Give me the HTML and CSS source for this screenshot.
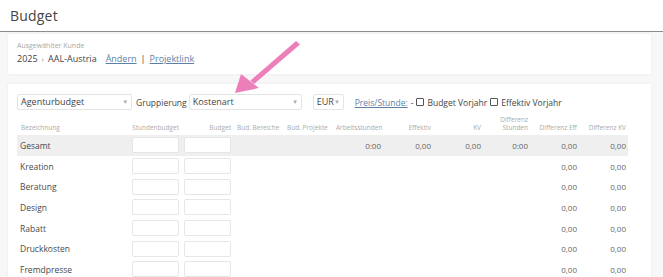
FILE: index.html
```html
<!DOCTYPE html>
<html lang="de">
<head>
    <title>Budget</title>
    <meta charset="UTF-8">
    <link rel="stylesheet" href="styles.css">
</head>
<body>
    <header class="page-head">
        <h1>Budget</h1>
    </header>

    <main class="content">
        <section class="card customer">
            <div class="label">Ausgewählter Kunde</div>
            <div class="crumbs">
                <span>2025</span>
                <span class="sep">›</span>
                <span>AAL-Austria</span>
                <a href="#" class="link">Ändern</a> | <a href="#" class="link">Projektlink</a>
            </div>
        </section>

        <section class="card budget">
            <div class="filters">
                <div class="select w-agentur">Agenturbudget<span class="caret">▾</span></div>
                <span class="filter-label">Gruppierung</span>
                <div class="select w-gruppe">Kostenart<span class="caret">▾</span></div>
                <div class="select w-cur">EUR<span class="caret">▾</span></div>
                <a href="#" class="link price">Preis/Stunde:</a>
                <span class="dash">-</span>
                <label class="check"><span class="box"></span>Budget Vorjahr</label>
                <label class="check"><span class="box"></span>Effektiv Vorjahr</label>
            </div>

            <table class="grid">
                <colgroup>
                    <col class="c-name">
                    <col class="c-in1">
                    <col class="c-in2">
                    <col class="c-50">
                    <col class="c-49">
                    <col class="c-51">
                    <col class="c-50">
                    <col class="c-50">
                    <col class="c-47">
                    <col class="c-49">
                    <col class="c-49">
                </colgroup>
                <thead>
                    <tr>
                        <th class="left">Bezeichnung</th>
                        <th>Stundenbudget</th>
                        <th>Budget</th>
                        <th class="left">Bud. Bereiche</th>
                        <th class="left">Bud. Projekte</th>
                        <th class="left">Arbeitsstunden</th>
                        <th>Effektiv</th>
                        <th>KV</th>
                        <th>Differenz<br>Stunden</th>
                        <th>Differenz Eff</th>
                        <th>Differenz KV</th>
                    </tr>
                </thead>
                <tbody>
                    <tr class="total">
                        <td class="name">Gesamt</td>
                        <td><span class="input"></span></td>
                        <td><span class="input"></span></td>
                        <td></td>
                        <td></td>
                        <td>0:00</td>
                        <td>0,00</td>
                        <td>0,00</td>
                        <td>0:00</td>
                        <td>0,00</td>
                        <td>0,00</td>
                    </tr>
                    <tr>
                        <td class="name">Kreation</td>
                        <td><span class="input"></span></td>
                        <td><span class="input"></span></td>
                        <td></td><td></td><td></td><td></td><td></td><td></td>
                        <td>0,00</td>
                        <td>0,00</td>
                    </tr>
                    <tr>
                        <td class="name">Beratung</td>
                        <td><span class="input"></span></td>
                        <td><span class="input"></span></td>
                        <td></td><td></td><td></td><td></td><td></td><td></td>
                        <td>0,00</td>
                        <td>0,00</td>
                    </tr>
                    <tr>
                        <td class="name">Design</td>
                        <td><span class="input"></span></td>
                        <td><span class="input"></span></td>
                        <td></td><td></td><td></td><td></td><td></td><td></td>
                        <td>0,00</td>
                        <td>0,00</td>
                    </tr>
                    <tr>
                        <td class="name">Rabatt</td>
                        <td><span class="input"></span></td>
                        <td><span class="input"></span></td>
                        <td></td><td></td><td></td><td></td><td></td><td></td>
                        <td>0,00</td>
                        <td>0,00</td>
                    </tr>
                    <tr>
                        <td class="name">Druckkosten</td>
                        <td><span class="input"></span></td>
                        <td><span class="input"></span></td>
                        <td></td><td></td><td></td><td></td><td></td><td></td>
                        <td>0,00</td>
                        <td>0,00</td>
                    </tr>
                    <tr>
                        <td class="name">Fremdpresse</td>
                        <td><span class="input"></span></td>
                        <td><span class="input"></span></td>
                        <td></td><td></td><td></td><td></td><td></td><td></td>
                        <td>0,00</td>
                        <td>0,00</td>
                    </tr>
                </tbody>
            </table>
        </section>
    </main>

    <!-- annotation arrow pointing at the Gruppierung select -->
    <svg class="arrow" width="80" height="64" viewBox="0 0 80 64">
        <path d="M64 9 L68 12.5 L22 52 L18.5 48.5 Z" fill="#ec7fb9"/>
        <path d="M3 61 L9 42 L27 56 Z" fill="#ec7fb9"/>
    </svg>
</body>
</html>
```

FILE: styles.css
```css
* {
    box-sizing: border-box;
}

body {
    margin: 0;
    background-color: #f7f7f7;
    font-family: "Open Sans", "DejaVu Sans", sans-serif;
    color: #4a4a4a;
    overflow: hidden;
    height: 277px;
}

.page-head {
    background-color: #fff;
    height: 32px;
    border-bottom: 1px solid #8c8c8c;
    padding: 6px 10px 0;
}

.page-head h1 {
    margin: 0;
    font-size: 14px;
    font-weight: 400;
    color: #444;
    letter-spacing: 0.2px;
}

.content {
    padding: 2px 12px 0 8px;
}

.card {
    background-color: #fff;
    box-shadow: 0 0 3px rgba(0, 0, 0, 0.06);
}

.customer {
    height: 40px;
    padding: 7px 9px 0;
}

.label {
    font-size: 7px;
    color: #a8a8a8;
}

.crumbs {
    margin-top: 2px;
    font-size: 9px;
    color: #444;
    display: flex;
    gap: 4px;
    align-items: baseline;
}

.crumbs .sep {
    color: #888;
    font-size: 8px;
}

.link {
    color: #5c7fa6;
    text-decoration: underline;
}

.crumbs .link:first-of-type {
    margin-left: 5px;
}

.budget {
    margin-top: 10px;
    height: 200px;
    padding: 10px 9px 0;
}

.filters {
    display: flex;
    align-items: center;
    height: 16px;
    font-size: 8.5px;
    color: #444;
}

.select {
    position: relative;
    height: 16px;
    border: 1px solid #e4e4e4;
    border-radius: 2px;
    padding: 0 0 0 3px;
    line-height: 14px;
    font-size: 9px;
}

.caret {
    position: absolute;
    right: 4px;
    top: 0;
    font-size: 7px;
    color: #aaa;
}

.w-agentur {
    width: 115px;
}

.w-gruppe {
    width: 113px;
}

.w-cur {
    width: 31px;
    margin-left: 11px;
}

.filter-label {
    margin: 0 2px 0 4px;
}

.price {
    margin-left: 11px;
}

.dash {
    margin: 0 3px;
}

.check {
    display: flex;
    align-items: center;
    margin-right: 3px;
}

.box {
    width: 8px;
    height: 8px;
    border: 1px solid #555;
    border-radius: 1px;
    margin-right: 3px;
}

.grid {
    margin-top: 6px;
    border-collapse: collapse;
    table-layout: fixed;
    width: 611px;
}

.c-name { width: 108px; }
.c-in1 { width: 56px; }
.c-in2 { width: 52px; }
.c-50 { width: 50px; }
.c-49 { width: 49px; }
.c-51 { width: 51px; }
.c-47 { width: 47px; }

.grid th {
    height: 19px;
    font-size: 6.5px;
    font-weight: 400;
    color: #aaa;
    text-align: right;
    padding: 0 2px 3px 0;
    vertical-align: bottom;
    white-space: nowrap;
    line-height: 8px;
}

.grid th.left {
    text-align: left;
    padding-left: 4px;
}

.grid td {
    height: 20.7px;
    font-size: 8px;
    color: #666;
    text-align: right;
    padding: 0 2px 0 0;
    vertical-align: middle;
}

.grid td.name {
    text-align: left;
    padding-left: 3px;
    font-size: 8.5px;
    color: #4a4a4a;
}

.grid tr.total td {
    background-color: #efefef;
}

.input {
    display: block;
    margin-left: auto;
    width: 47px;
    height: 16px;
    background-color: #fff;
    border: 1px solid #e6e6e6;
    border-radius: 2px;
}

.arrow {
    position: absolute;
    left: 232px;
    top: 32px;
}
```
